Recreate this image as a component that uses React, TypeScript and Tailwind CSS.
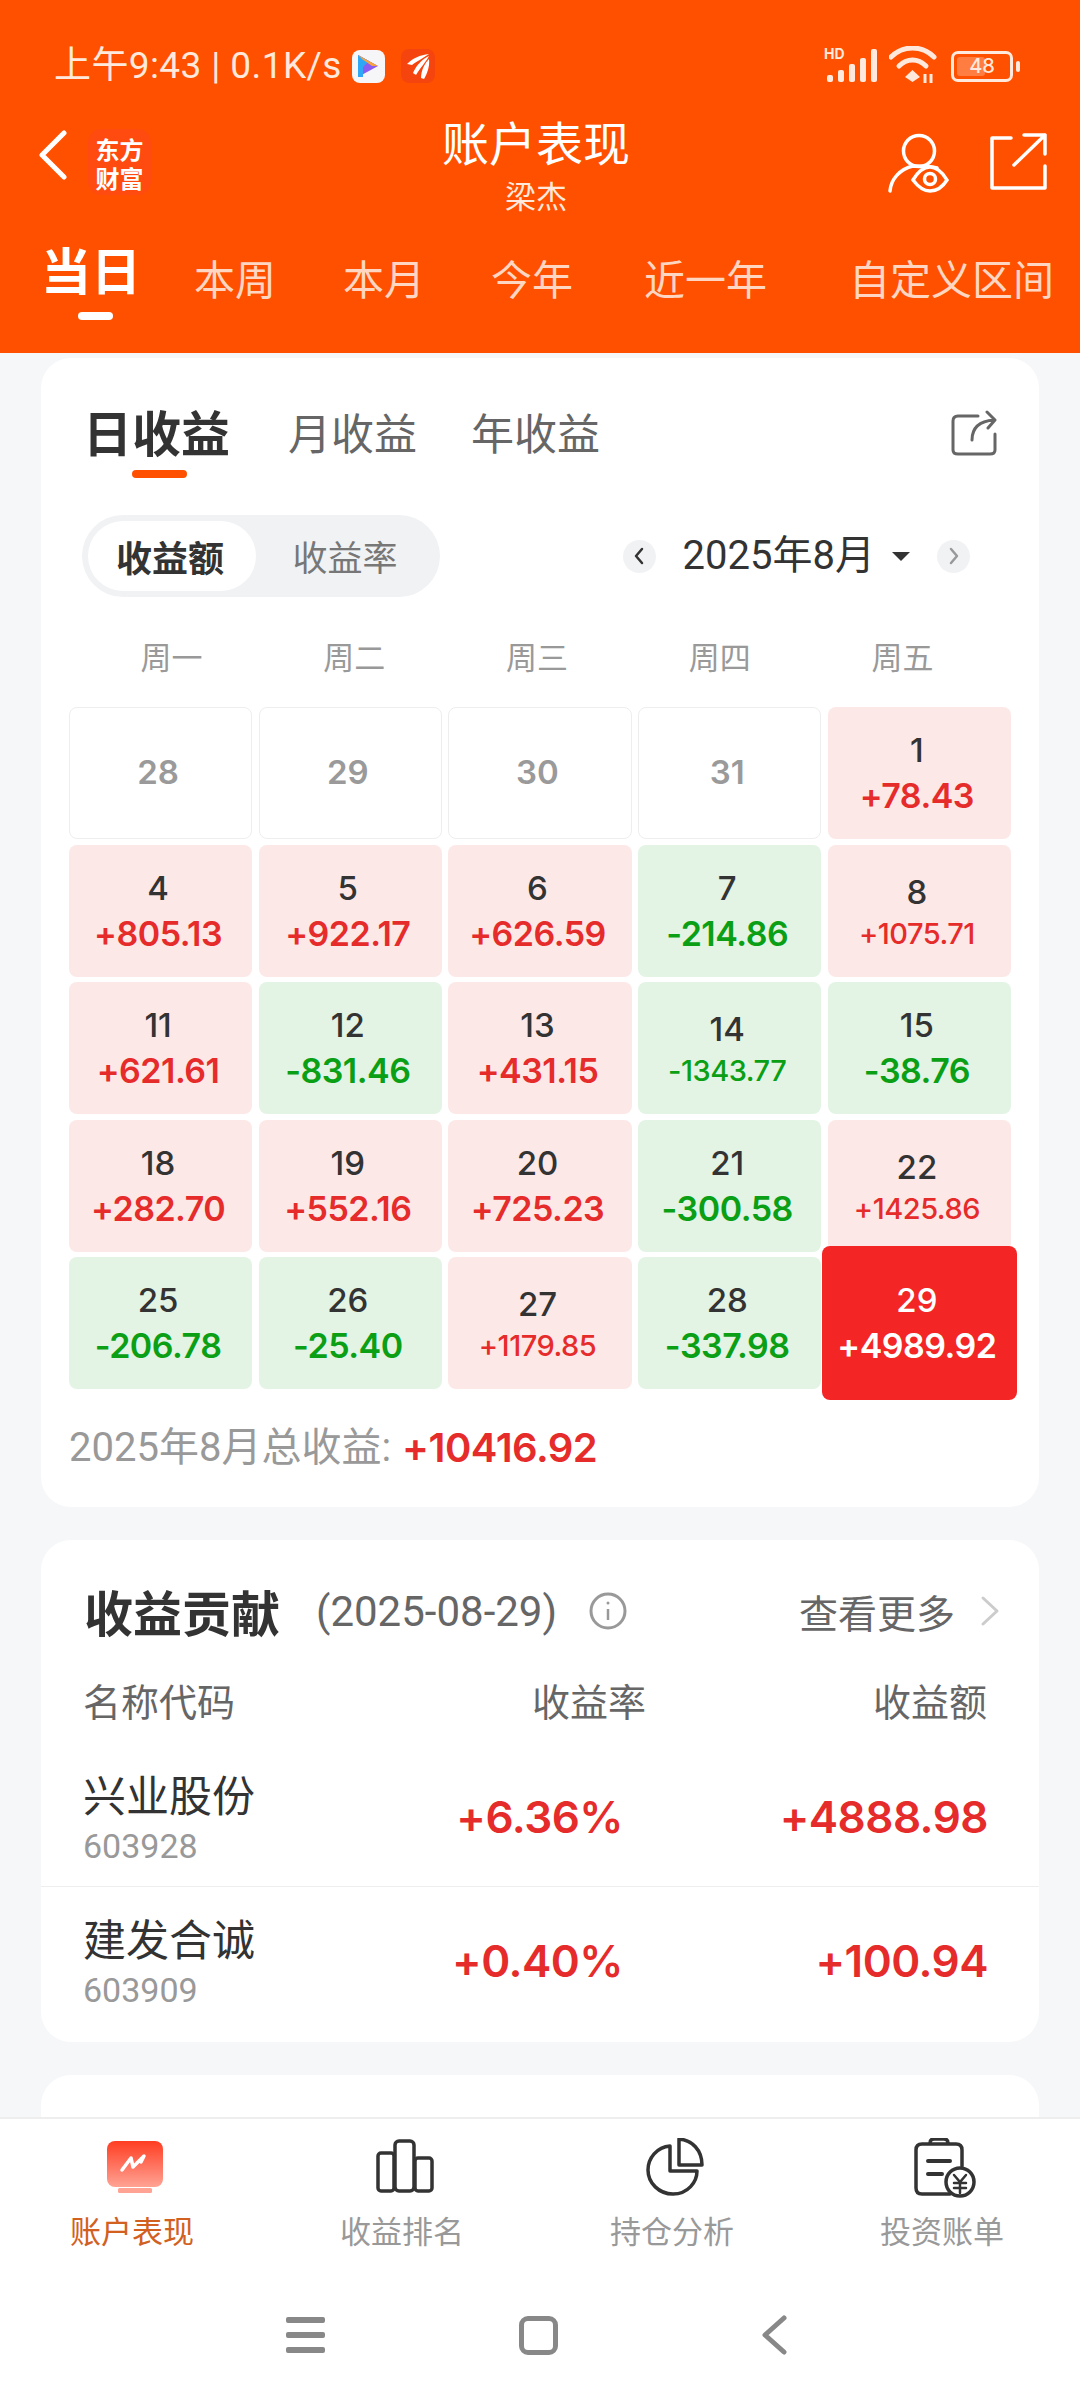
import React from 'react';

const CJK = "font-['Noto_Sans_CJK_SC','Noto_Sans',sans-serif]";
const NUM = "font-['Inter','Noto_Sans_CJK_SC',sans-serif]";

type Day = { d: string; v?: string; small?: boolean; today?: boolean };

const rows: Day[] = [
  { d: '28' }, { d: '29' }, { d: '30' }, { d: '31' }, { d: '1', v: '+78.43' },
  { d: '4', v: '+805.13' }, { d: '5', v: '+922.17' }, { d: '6', v: '+626.59' }, { d: '7', v: '-214.86' }, { d: '8', v: '+1075.71', small: true },
  { d: '11', v: '+621.61' }, { d: '12', v: '-831.46' }, { d: '13', v: '+431.15' }, { d: '14', v: '-1343.77', small: true }, { d: '15', v: '-38.76' },
  { d: '18', v: '+282.70' }, { d: '19', v: '+552.16' }, { d: '20', v: '+725.23' }, { d: '21', v: '-300.58' }, { d: '22', v: '+1425.86', small: true },
  { d: '25', v: '-206.78' }, { d: '26', v: '-25.40' }, { d: '27', v: '+1179.85', small: true }, { d: '28', v: '-337.98' }, { d: '29', v: '+4989.92', today: true },
];

const DayCell = ({ item }: { item: Day }) => {
  if (!item.v) {
    return (
      <div className={`${NUM} h-[132px] rounded-[8px] border border-[#eeeeee] bg-white flex items-center justify-center pr-[5px] text-[33px] font-semibold text-[#9a9a9a]`}>
        {item.d}
      </div>
    );
  }
  const up = item.v.startsWith('+');
  return (
    <div className={`${NUM} relative h-[132px] rounded-[8px] flex flex-col items-center pr-[5px] ${up ? 'bg-[#fde8e8]' : 'bg-[#e3f4e5]'} ${item.small ? 'pt-[27px]' : 'pt-[23px]'}`}>
      <span className="h-[40px] leading-[40px] text-[33px] font-medium text-[#333333]">{item.d}</span>
      {item.small ? (
        <span className={`mt-[2px] h-[40px] leading-[40px] text-[29px] font-medium tracking-[-0.5px] ${up ? 'text-[#e62b2b]' : 'text-[#0a9f14]'}`}>{item.v}</span>
      ) : (
        <span className={`mt-[6px] h-[40px] leading-[40px] text-[34px] font-semibold tracking-[-0.5px] ${up ? 'text-[#e62b2b]' : 'text-[#0a9f14]'}`}>{item.v}</span>
      )}
      {item.today && (
        <div className="absolute -left-[6px] -right-[6px] -top-[11px] -bottom-[11px] z-10 rounded-[8px] bg-[#f32525] flex flex-col items-center pt-[34px] pr-[5px] text-white">
          <span className="h-[40px] leading-[40px] text-[33px] font-medium">{item.d}</span>
          <span className="mt-[6px] h-[40px] leading-[40px] text-[34px] font-semibold tracking-[-0.5px]">{item.v}</span>
        </div>
      )}
    </div>
  );
};

const StatusIcons = () => (
  <div className="flex items-center text-[#ffe9dd]">
    <svg width="54" height="40" viewBox="0 0 54 40" className="mr-[11px]">
      <text x="0" y="13" fontSize="14" fontWeight="700" fontFamily="Inter" fill="currentColor">HD</text>
      <g fill="currentColor">
        <rect x="3" y="29" width="6" height="7" rx="2" />
        <rect x="14" y="24" width="6" height="12" rx="2" />
        <rect x="25" y="18" width="6" height="18" rx="2" />
        <rect x="36" y="12" width="6" height="24" rx="2" />
        <rect x="47" y="3" width="6" height="33" rx="2" />
      </g>
    </svg>
    <svg width="48" height="40" viewBox="0 0 48 40" fill="none" className="mr-[14px]">
      <path d="M2 11 C14 -1 33 -1 45 11" stroke="currentColor" strokeWidth="5" strokeLinecap="round" />
      <path d="M10 20 C18 12 29 12 37 20" stroke="currentColor" strokeWidth="5" strokeLinecap="round" />
      <path d="M23.5 24 L31 31 L23.5 36 L16 31 Z" fill="currentColor" />
      <path d="M36 28 V37 M42 28 V37" stroke="currentColor" strokeWidth="3" />
    </svg>
    <div className="relative w-[62px] h-[31px] rounded-[7px] border-[3px] border-[#ffe9dd] p-[3px] flex items-center">
      <div className="w-[28px] h-full rounded-[3px] bg-[#ff7d40]" />
      <span className={`${NUM} absolute inset-0 flex items-center justify-center text-[20px] font-medium leading-none`}>48</span>
    </div>
    <div className="ml-[3px] w-[4px] h-[11px] rounded-[2px] bg-[#ffe9dd]" />
  </div>
);

const Header = () => (
  <header className={`${CJK} h-[353px] bg-[#ff5000] text-white shrink-0`}>
    <div className="h-[112px] pl-[54px] pr-[60px] flex items-start justify-between">
      <div className="mt-[47px] flex items-center h-[38px]">
        <span className="text-[37px] leading-[38px] tracking-[0.4px] text-[#ffe9dd] whitespace-nowrap font-['Roboto','Noto_Sans_CJK_SC',sans-serif]">上午9:43 | 0.1K/s</span>
        <div className="ml-[10px] w-[33px] h-[33px] rounded-[8px] bg-[#f6f6f8] flex items-center justify-center">
          <svg width="24" height="26" viewBox="0 0 24 26">
            <path d="M2 2 L22 13 L2 24 Z" fill="#8a5cf0" />
            <path d="M2 2 L13 8 L7 14 L7 24 L2 24 Z" fill="#2ea7f5" />
            <path d="M2 2 L22 13 L16 13 L6 6 Z" fill="#f7a440" />
          </svg>
        </div>
        <div className="ml-[16px] w-[34px] h-[34px] rounded-[8px] bg-[#f6440f] flex items-center justify-center">
          <svg width="24" height="26" viewBox="0 0 24 26" fill="white">
            <path d="M1 11 C7 5 14 2 23 1 C17 5 10 9 6 12 Z" />
            <path d="M7 20 C10 13 15 7 23 3 C20 9 14 15 10 22 Z" />
            <path d="M15 25 C15 17 19 10 23 6 C24 13 21 21 18 26 Z" />
          </svg>
        </div>
      </div>
      <div className="mt-[46px]"><StatusIcons /></div>
    </div>

    <div className="h-[108px] pl-[39px] pr-[47px] grid grid-cols-[1fr_auto_1fr]">
      <div className="flex items-start pt-[18px]">
        <svg width="28" height="50" viewBox="0 0 28 50" fill="none" stroke="white" strokeWidth="5" strokeLinecap="round" strokeLinejoin="round">
          <path d="M25 3 L3 25 L25 47" />
        </svg>
        <svg className="ml-[21px] -mt-[1px]" width="63" height="66" viewBox="0 0 63 66">
          <rect width="63" height="66" rx="14" fill="#ff4a10" />
          <text x="31.5" y="30" textAnchor="middle" fontSize="24" fontWeight="700" fill="white" fontFamily="Noto Sans CJK SC">东方</text>
          <text x="31.5" y="59" textAnchor="middle" fontSize="24" fontWeight="700" fill="white" fontFamily="Noto Sans CJK SC">财富</text>
        </svg>
      </div>
      <div className="flex flex-col items-center">
        <span className="text-[47px] leading-[56px] mt-[1px]">账户表现</span>
        <span className="mt-[8px] text-[31px] leading-[36px] text-[#ffe9dd]">梁杰</span>
      </div>
      <div className="-mr-[14px] flex justify-end items-start pt-[21px] gap-[33px]">
        <svg width="70" height="60" viewBox="0 0 70 60" fill="none" stroke="white" strokeWidth="3.5" strokeLinecap="round">
          <circle cx="32" cy="18" r="15.5" />
          <path d="M3 58 C4 46 13 36 26 33 C35 33 44 33 50 35" />
          <path d="M26 47 C32 37 38 34 43 34 C48 34 55 38 60 47 C55 55 48 58 43 58 C38 58 32 55 26 47 Z" fill="#ff5000" />
          <circle cx="43" cy="46" r="5.5" />
        </svg>
        <svg width="57" height="58" viewBox="0 0 57 58" fill="none" stroke="white" strokeWidth="3.5" strokeLinecap="round" strokeLinejoin="round">
          <path d="M21 5 H2 V55 H55 V33" />
          <path d="M24 32 L55 2 M34 2 H55 V21" />
        </svg>
      </div>
    </div>

    <nav className="h-[133px] flex pl-[41px] whitespace-nowrap">
      <div className="relative">
        <span className="block mt-[20px] text-[50px] leading-[56px] font-bold">当日</span>
        <div className="absolute left-[37px] top-[92px] w-[35px] h-[8px] rounded-full bg-white" />
      </div>
      {[
        { t: '本周', c: 'ml-[53px]' },
        { t: '本月', c: 'ml-[67px]' },
        { t: '今年', c: 'ml-[66px]' },
        { t: '近一年', c: 'ml-[71px]' },
        { t: '自定义区间', c: 'ml-[82px]' },
      ].map((tab) => (
        <span key={tab.t} className={`${tab.c} mt-[34px] text-[41px] leading-[46px] text-[#ffd6c2]`}>{tab.t}</span>
      ))}
    </nav>
  </header>
);

const IncomeCard = () => (
  <section className="h-[1149px] rounded-[30px] bg-white px-[28px] relative">
    <div className="pt-[49px] pl-[14px] pr-[14px] flex items-start h-[157px]">
      <div className="flex flex-col items-center">
        <span className="text-[49px] leading-[48px] font-bold text-[#333333]">日收益</span>
        <div className="mt-[15px] ml-[6px] w-[55px] h-[8px] rounded-full bg-[#ff5000]" />
      </div>
      <span className="ml-[58px] text-[43px] leading-[48px] text-[#666666]">月收益</span>
      <span className="ml-[54px] text-[43px] leading-[48px] text-[#666666]">年收益</span>
      <svg className="ml-auto mt-[3px]" width="46" height="46" viewBox="0 0 46 46" fill="none" stroke="#666666" strokeWidth="3" strokeLinecap="round" strokeLinejoin="round">
        <path d="M27 6 H7 Q2 6 2 11 V40 Q2 44 7 44 H39 Q44 44 44 40 V24" />
        <path d="M21 30 C21 17 29 11 43 10 M36 2 L44 10 L37 18" />
      </svg>
    </div>

    <div className="flex items-center h-[82px] pl-[13px] pr-[41px]">
      <div className="w-[358px] h-[82px] rounded-full bg-[#f1f2f4] p-[6px] flex items-center">
        <div className="w-[168px] h-[70px] rounded-full bg-white flex items-center justify-center pr-[4px] text-[36px] font-bold text-[#333333]">收益额</div>
        <div className="w-[178px] text-center text-[35px] text-[#777777]">收益率</div>
      </div>
      <div className="ml-auto flex items-center">
        <div className="w-[33px] h-[33px] rounded-full bg-[#f1f2f4] flex items-center justify-center">
          <svg width="10" height="18" viewBox="0 0 10 18" fill="none" stroke="#333333" strokeWidth="2.5" strokeLinecap="round" strokeLinejoin="round"><path d="M8 2 L2 9 L8 16" /></svg>
        </div>
        <span className="ml-[27px] text-[40px] leading-[48px] text-[#333333] font-['Roboto','Noto_Sans_CJK_SC',sans-serif]">2025年8月</span>
        <div className="ml-[17px] w-0 h-0 border-x-[9px] border-x-transparent border-t-[9px] border-t-[#333333]" />
        <div className="ml-[27px] w-[33px] h-[33px] rounded-full bg-[#f1f2f4] flex items-center justify-center">
          <svg width="10" height="18" viewBox="0 0 10 18" fill="none" stroke="#999999" strokeWidth="2.5" strokeLinecap="round" strokeLinejoin="round"><path d="M2 2 L8 9 L2 16" /></svg>
        </div>
      </div>
    </div>

    <div className="grid grid-cols-5 h-[110px] pl-[11px] pr-[17px] pt-[8px] items-center">
      {['周一', '周二', '周三', '周四', '周五'].map((w) => (
        <span key={w} className="text-center text-[31px] text-[#999999]">{w}</span>
      ))}
    </div>

    <div className="grid grid-cols-5 gap-x-[6.5px] gap-y-[5.5px]">
      {rows.map((item, i) => <DayCell key={i} item={item} />)}
    </div>

    <div className="mt-[37px] flex items-center h-[44px]">
      <span className="text-[40px] text-[#999999] font-['Roboto','Noto_Sans_CJK_SC',sans-serif]">2025年8月总收益:</span>
      <span className={`${NUM} ml-[11px] text-[40px] font-semibold text-[#e62b2b] tracking-[-0.5px]`}>+10416.92</span>
    </div>
  </section>
);

const holdings = [
  { name: '兴业股份', code: '603928', rate: '+6.36%', amt: '+4888.98', c: 'h-[169px] pt-[49px] pb-[21px] border-b border-[#eeeeee]' },
  { name: '建发合诚', code: '603909', rate: '+0.40%', amt: '+100.94', c: 'h-[154px] pt-[24px] pb-[33px]' },
];

const ContributionCard = () => (
  <section className="mt-[33px] h-[502px] rounded-[30px] bg-white">
    <div className="h-[142px] pl-[43px] pr-[39px] flex items-center">
      <span className="text-[49px] font-bold text-[#333333]">收益贡献</span>
      <span className="ml-[36px] text-[42px] text-[#666666] font-['Roboto',sans-serif]">(2025-08-29)</span>
      <svg className="ml-[32px]" width="38" height="38" viewBox="0 0 38 38" fill="none" stroke="#999999" strokeWidth="3">
        <circle cx="19" cy="19" r="17" />
        <path d="M19 17 V28" strokeWidth="2.5" />
        <circle cx="19" cy="11" r="1.5" fill="#999999" stroke="none" />
      </svg>
      <span className="ml-auto text-[39px] text-[#666666]">查看更多</span>
      <svg className="ml-[25px]" width="20" height="32" viewBox="0 0 20 32" fill="none" stroke="#cccccc" strokeWidth="3" strokeLinecap="round" strokeLinejoin="round"><path d="M3 3 L17 16 L3 29" /></svg>
    </div>
    <div className="grid grid-cols-[336px_227px_341px] pl-[42px] text-[38px] leading-[36px] text-[#666666] h-[36px] items-center">
      <span>名称代码</span>
      <span className="text-right">收益率</span>
      <span className="text-right">收益额</span>
    </div>
    {holdings.map((h) => (
      <div key={h.code} className={`pl-[42px] grid grid-cols-[313px_227px_365px] items-center ${h.c}`}>
        <div className="flex flex-col">
          <span className="text-[43px] leading-[52px] text-[#333333]">{h.name}</span>
          <span className="mt-[7px] text-[34px] leading-[40px] text-[#999999] font-['Roboto',sans-serif]">{h.code}</span>
        </div>
        <span className={`${NUM} text-right text-[44px] font-semibold text-[#e62b2b] tracking-[-0.5px]`}>{h.rate}</span>
        <span className={`${NUM} text-right text-[44px] font-semibold text-[#e62b2b] tracking-[-0.5px]`}>{h.amt}</span>
      </div>
    ))}
  </section>
);

const BottomNav = () => (
  <footer className={`${CJK} h-[283px] shrink-0 bg-white border-t-2 border-[#eeeeee] flex flex-col`}>
    <div className="grid grid-cols-4 pt-[19px]">
      <div className="flex flex-col items-center">
        <svg width="58" height="58" viewBox="0 0 58 58">
          <defs>
            <linearGradient id="act" x1="0" y1="0" x2="0" y2="1">
              <stop offset="0" stopColor="#ff3d22" />
              <stop offset="1" stopColor="#ffa394" />
            </linearGradient>
          </defs>
          <rect x="1" y="3" width="56" height="46" rx="8" fill="url(#act)" />
          <rect x="12" y="50" width="34" height="5" rx="1.5" fill="#ffa394" />
          <path d="M16 32 L25 20 L27 29 L38 18 L35 24" fill="none" stroke="#fff" strokeWidth="3.5" strokeLinecap="round" strokeLinejoin="round" />
        </svg>
        <span className="mt-[15px] -ml-[6px] text-[31px] leading-[38px] text-[#d2601e]">账户表现</span>
      </div>
      <div className="flex flex-col items-center">
        <svg width="58" height="58" viewBox="0 0 58 58" fill="none" stroke="#333333" strokeWidth="3.5" strokeLinejoin="round">
          <rect x="2" y="15" width="16" height="38" rx="3" />
          <rect x="19" y="3" width="19" height="50" rx="4" />
          <rect x="39" y="20" width="17" height="33" rx="3" />
        </svg>
        <span className="mt-[15px] -ml-[6px] text-[31px] leading-[38px] text-[#999999]">收益排名</span>
      </div>
      <div className="flex flex-col items-center">
        <svg width="58" height="58" viewBox="0 0 58 58" fill="none" stroke="#333333" strokeWidth="3.5" strokeLinejoin="round">
          <path d="M24 8 C11 9 2 20 2 32 C2 45 13 56 27 56 C42 56 51 44 51 33 H24 Z" />
          <path d="M33 1 C46 2 56 12 56 27 H33 Z" />
        </svg>
        <span className="mt-[15px] -ml-[6px] text-[31px] leading-[38px] text-[#999999]">持仓分析</span>
      </div>
      <div className="flex flex-col items-center">
        <svg width="62" height="60" viewBox="0 0 62 60" fill="none" stroke="#333333" strokeWidth="3.5" strokeLinecap="round">
          <path d="M36 56 H8 Q2 56 2 50 V12 Q2 6 8 6 H42 Q48 6 48 12 V28" />
          <path d="M16 5 Q16 1 20 1 H30 Q34 1 34 5" />
          <path d="M14 23 H36 M14 36 H28" strokeWidth="4" />
          <circle cx="46" cy="44" r="14" fill="#fff" />
          <path d="M40 37 L46 44 L52 37 M40 45 H52 M40 50 H52 M46 44 V55" strokeWidth="2.5" />
        </svg>
        <span className="mt-[13px] -ml-[6px] text-[31px] leading-[38px] text-[#999999]">投资账单</span>
      </div>
    </div>
    <div className="mt-[66px] h-[40px] flex items-center pl-[286px]">
      <div className="flex flex-col justify-between h-[36px] w-[39px]">
        <div className="h-[6px] rounded-[2px] bg-[#888888]" />
        <div className="h-[6px] rounded-[2px] bg-[#888888]" />
        <div className="h-[6px] rounded-[2px] bg-[#888888]" />
      </div>
      <div className="ml-[194px] w-[39px] h-[39px] rounded-[9px] border-[5px] border-[#888888]" />
      <svg className="ml-[203px]" width="26" height="40" viewBox="0 0 26 40" fill="none" stroke="#888888" strokeWidth="5" strokeLinecap="round" strokeLinejoin="round">
        <path d="M23 3 L4 20 L23 37" />
      </svg>
    </div>
  </footer>
);

export default function App() {
  return (
    <div className={`${CJK} w-[1080px] h-[2400px] overflow-hidden flex flex-col bg-[#f6f7f9]`}>
      <Header />
      <main className="flex-1 overflow-hidden px-[41px] pt-[5px]">
        <IncomeCard />
        <ContributionCard />
        <section className="mt-[33px] h-[200px] rounded-t-[30px] bg-white" />
      </main>
      <BottomNav />
    </div>
  );
}
